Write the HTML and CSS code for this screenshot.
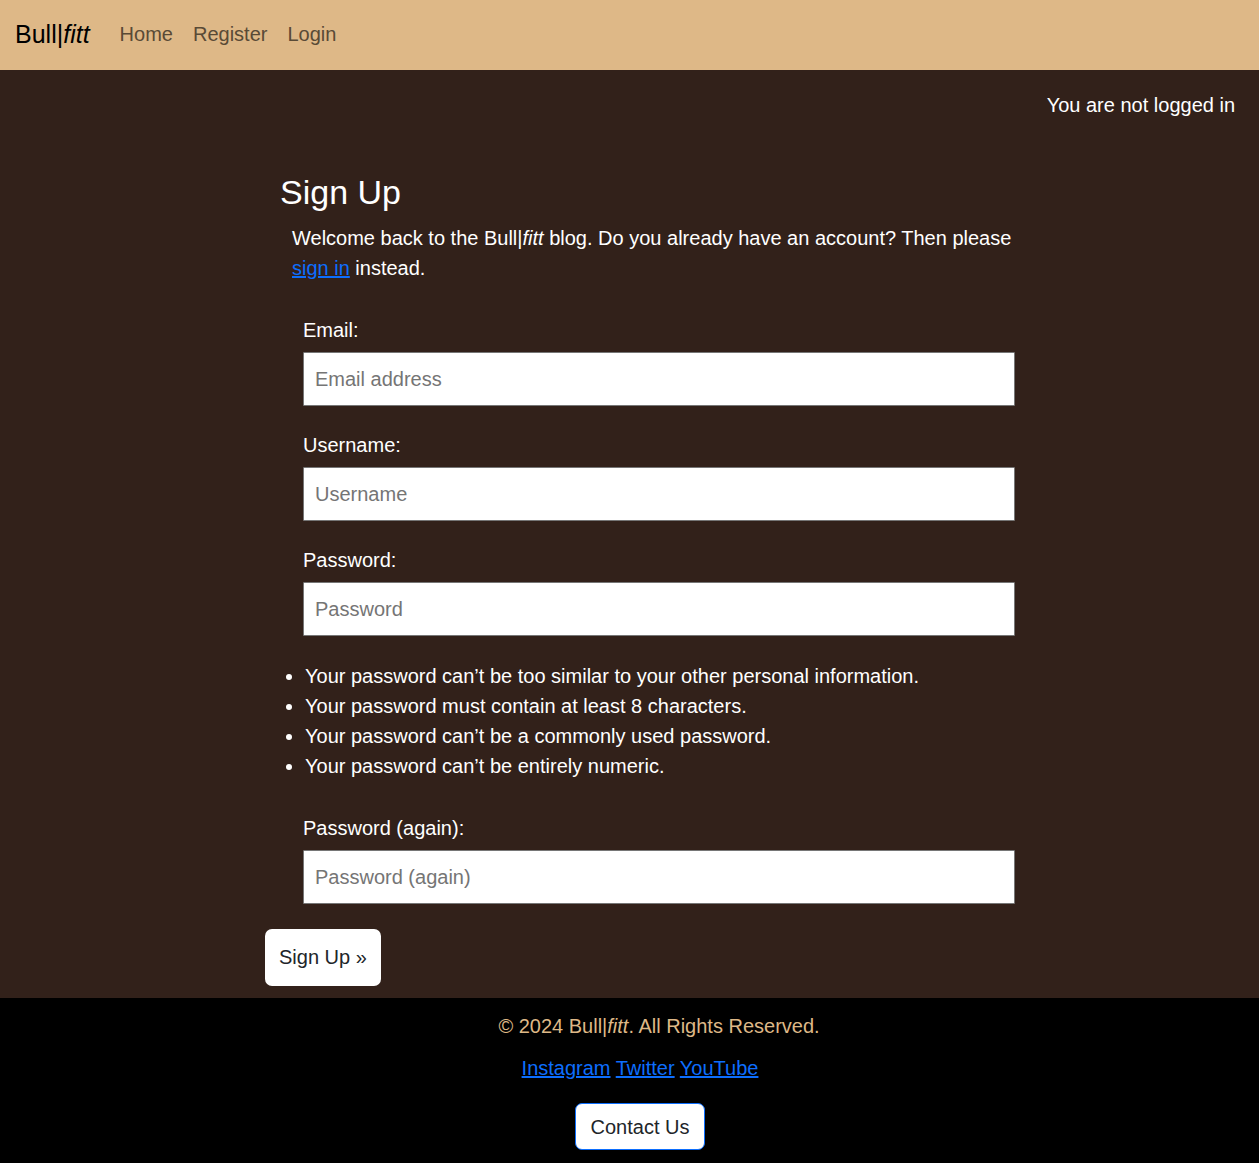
FILE: index.html
```html
<!DOCTYPE html>
<html lang="en">
<head>
<meta charset="utf-8">
<meta name="viewport" content="width=device-width, initial-scale=1">
<title>Bull|fitt - Sign Up</title>
<link rel="stylesheet" href="styles.css">
</head>
<body>
<header class="navbar">
  <a class="brand" href="#">Bull|<em>fitt</em></a>
  <nav class="nav">
    <a href="#">Home</a>
    <a href="#">Register</a>
    <a href="#">Login</a>
  </nav>
</header>
<main class="content">
  <p class="status">You are not logged in</p>
  <section class="signup">
    <h1>Sign Up</h1>
    <p class="intro">Welcome back to the Bull|<em>fitt</em> blog. Do you already have an account? Then please <a href="#">sign in</a> instead.</p>
    <form>
      <div class="field">
        <label for="email">Email:</label>
        <input id="email" type="email" placeholder="Email address">
      </div>
      <div class="field">
        <label for="username">Username:</label>
        <input id="username" type="text" placeholder="Username">
      </div>
      <div class="field">
        <label for="password1">Password:</label>
        <input id="password1" type="password" placeholder="Password">
      </div>
      <ul class="hints">
        <li>Your password can’t be too similar to your other personal information.</li>
        <li>Your password must contain at least 8 characters.</li>
        <li>Your password can’t be a commonly used password.</li>
        <li>Your password can’t be entirely numeric.</li>
      </ul>
      <div class="field">
        <label for="password2">Password (again):</label>
        <input id="password2" type="password" placeholder="Password (again)">
      </div>
      <button class="submit" type="submit">Sign Up »</button>
    </form>
  </section>
</main>
<footer class="footer">
  <p class="copyright">© 2024 Bull|<em>fitt</em>. All Rights Reserved.</p>
  <p class="social"><a href="#">Instagram</a> <a href="#">Twitter</a> <a href="#">YouTube</a></p>
  <button class="contact" type="button">Contact Us</button>
</footer>
</body>
</html>
```
FILE: styles.css
```css
* {
  box-sizing: border-box;
}

body {
  margin: 0;
  min-height: 100vh;
  display: flex;
  flex-direction: column;
  background: #000;
  color: #fff;
  font: 20px/30px "Liberation Sans", Arial, sans-serif;
}

h1,
p,
ul {
  margin: 0;
}

a {
  color: #0d6efd;
}

.navbar {
  display: flex;
  align-items: center;
  gap: 30px;
  padding: 15px 15px 17px;
  background: #deb887;
}

.brand {
  color: #000;
  font-size: 25px;
  line-height: 38px;
  text-decoration: none;
}

.nav {
  display: flex;
  gap: 20px;
}

.nav a {
  color: #594a36;
  text-decoration: none;
}

.content {
  padding: 20px 24px 12px 45px;
  background: #32211a;
}

.status {
  text-align: right;
}

.signup {
  max-width: 750px;
  margin: 50px auto 0;
  padding-left: 15px;
}

h1 {
  margin-bottom: 8px;
  font-size: 34px;
  font-weight: 400;
  line-height: 45px;
}

.intro {
  margin-bottom: 32px;
  padding-left: 12px;
}

.field {
  padding-left: 23px;
  margin-bottom: 24px;
}

.field label {
  display: block;
  margin-bottom: 7px;
}

.field input {
  display: block;
  width: 100%;
  height: 54px;
  padding: 0 11px;
  border: 1px solid #767676;
  border-radius: 1px;
  background: #fff;
  color: #212529;
  font: inherit;
}

.field input::placeholder {
  color: #757575;
}

.hints {
  margin: 25px 0 32px;
  padding-left: 25px;
}

.submit {
  display: block;
  margin: 25px 0 0 -15px;
  padding: 13px 14px 14px;
  border: 0;
  border-radius: 7px;
  background: #fff;
  color: #212529;
  font: inherit;
}

.footer {
  display: flex;
  flex-direction: column;
  align-items: center;
  gap: 12px;
  padding: 13px 0 13px 21px;
}

.copyright {
  padding-left: 38px;
  color: #deb887;
}

.contact {
  margin-top: 8px;
  padding: 8px 15px 7px;
  border: 1px solid #0d6efd;
  border-radius: 7px;
  background: #fff;
  color: #212529;
  font: inherit;
}
```
